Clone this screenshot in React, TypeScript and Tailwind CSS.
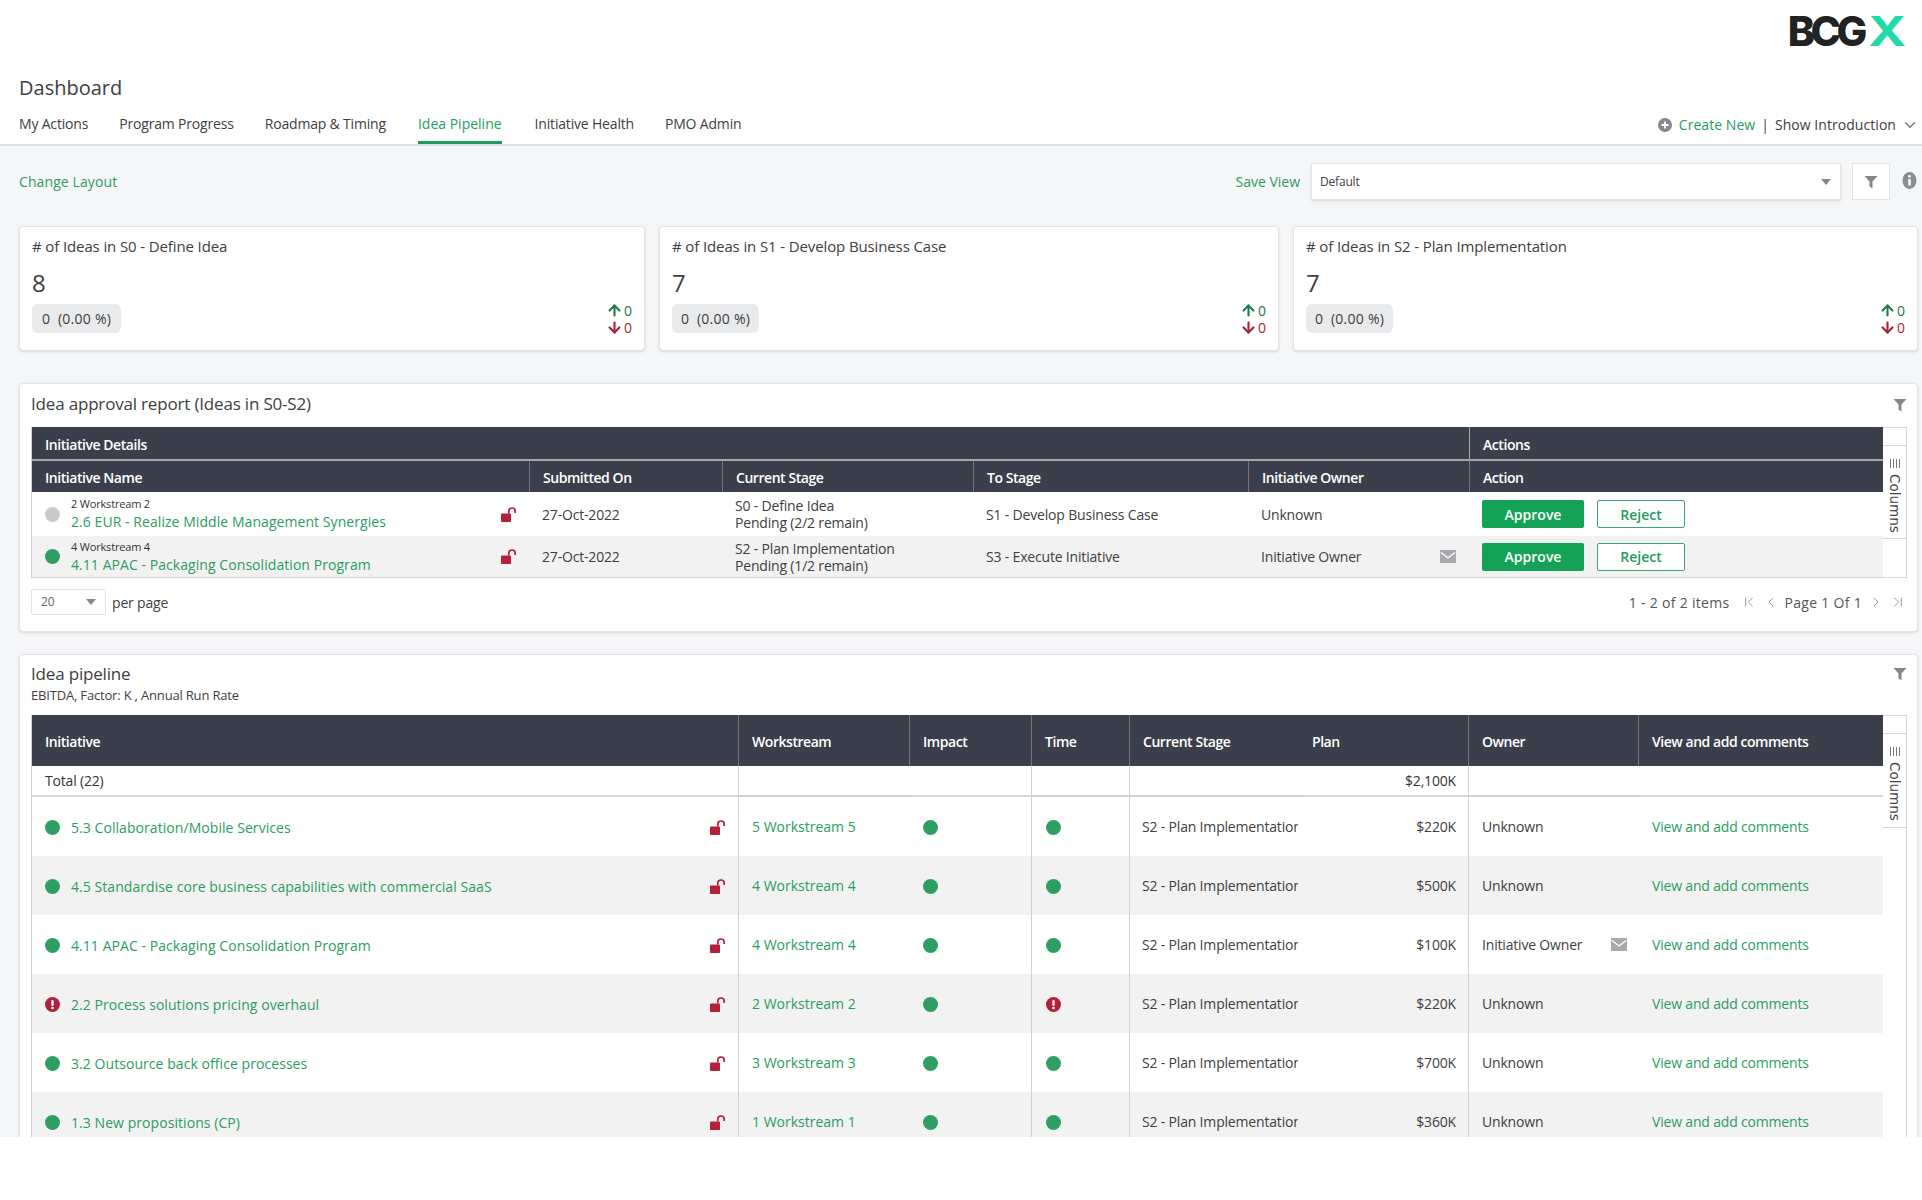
import { ArrowDown, ArrowUp, ChevronDown, ChevronFirst, ChevronLast, ChevronLeft, ChevronRight } from 'lucide-react';

// ── Data ─────────────────────────────────────────────────────────────────────

const tabs = ['My Actions', 'Program Progress', 'Roadmap & Timing', 'Idea Pipeline', 'Initiative Health', 'PMO Admin'];

const kpis = [
  { title: '# of Ideas in S0 - Define Idea', value: '8', width: 'w-[626px]', pill: 'w-[89px]' },
  { title: '# of Ideas in S1 - Develop Business Case', value: '7', width: 'w-[620px]', pill: 'w-[87px]' },
  { title: '# of Ideas in S2 - Plan Implementation', value: '7', width: 'w-[625px]', pill: 'w-[87px]' },
];

const approvals = [
  {
    status: 'grey',
    workstream: '2 Workstream 2',
    name: '2.6 EUR - Realize Middle Management Synergies',
    date: '27-Oct-2022',
    stage: ['S0 - Define Idea', 'Pending (2/2 remain)'],
    to: 'S1 - Develop Business Case',
    owner: 'Unknown',
    mail: false,
    h: 'h-[44px]',
  },
  {
    status: 'green',
    workstream: '4 Workstream 4',
    name: '4.11 APAC - Packaging Consolidation Program',
    date: '27-Oct-2022',
    stage: ['S2 - Plan Implementation', 'Pending (1/2 remain)'],
    to: 'S3 - Execute Initiative',
    owner: 'Initiative Owner',
    mail: true,
    h: 'h-[42px]',
  },
];

const pipeline = [
  { status: 'green', name: '5.3 Collaboration/Mobile Services', ws: '5 Workstream 5', time: 'green', plan: '$220K', owner: 'Unknown', mail: false },
  { status: 'green', name: '4.5 Standardise core business capabilities with commercial SaaS', ws: '4 Workstream 4', time: 'green', plan: '$500K', owner: 'Unknown', mail: false },
  { status: 'green', name: '4.11 APAC - Packaging Consolidation Program', ws: '4 Workstream 4', time: 'green', plan: '$100K', owner: 'Initiative Owner', mail: true },
  { status: 'red', name: '2.2 Process solutions pricing overhaul', ws: '2 Workstream 2', time: 'red', plan: '$220K', owner: 'Unknown', mail: false },
  { status: 'green', name: '3.2 Outsource back office processes', ws: '3 Workstream 3', time: 'green', plan: '$700K', owner: 'Unknown', mail: false },
  { status: 'green', name: '1.3 New propositions (CP)', ws: '1 Workstream 1', time: 'green', plan: '$360K', owner: 'Unknown', mail: false },
];

// ── Small drawings ───────────────────────────────────────────────────────────

function Status({ kind }: { kind: string }) {
  if (kind === 'red') {
    return (
      <svg width="15" height="15" viewBox="0 0 15 15" className="shrink-0">
        <circle cx="7.5" cy="7.5" r="7.5" fill="#b3203a" />
        <rect x="6.3" y="3" width="2.4" height="6" rx="1" fill="#fff" />
        <circle cx="7.5" cy="11" r="1.3" fill="#fff" />
      </svg>
    );
  }
  return <span className={`block w-[15px] h-[15px] rounded-full shrink-0 ${kind === 'grey' ? 'bg-[#c9cacc]' : 'bg-[#2f9e62]'}`} />;
}

function OpenLock() {
  return (
    <svg width="16" height="15" viewBox="0 0 16 15" className="shrink-0">
      <rect x="0" y="6.5" width="10" height="8.5" rx="0.8" fill="#b3203a" />
      <path d="M7.8 6.5V4.2a3.2 3.2 0 0 1 6.4 0V6" fill="none" stroke="#b3203a" strokeWidth="1.7" />
    </svg>
  );
}

function Mail() {
  return (
    <svg width="16" height="13" viewBox="0 0 16 13" className="shrink-0">
      <rect width="16" height="13" fill="#a7a9ac" />
      <path d="M1 2.5 8 8l7-5.500" fill="none" stroke="#fff" strokeWidth="1.3" />
    </svg>
  );
}

function Funnel({ size = 14 }: { size?: number }) {
  return (
    <svg width={size} height={size} viewBox="0 0 14 14">
      <path d="M0.500 1h13L8.500 6.500V13.500L5.500 11.500V6.500Z" fill="#84878c" />
    </svg>
  );
}

function ColumnsRail({ top, mid }: { top: string; mid: string }) {
  return (
    <div className="w-[24px] shrink-0 flex flex-col border border-l-0 border-[#d4d6d9]">
      <div className={`${top} border-b border-[#d4d6d9]`} />
      <div className={`${mid} flex flex-col items-center pt-[13px] border-b border-[#d4d6d9]`}>
        <div className="flex gap-[2px] h-[9px]">
          <span className="w-px bg-[#777]" />
          <span className="w-px bg-[#777]" />
          <span className="w-px bg-[#777]" />
          <span className="w-px bg-[#777]" />
        </div>
        <span className="[writing-mode:vertical-rl] text-[13.500px] leading-none tracking-normal mt-[6px] text-[#444] [font-family:'DejaVu_Sans',sans-serif]">Columns</span>
      </div>
      <div className="flex-1" />
    </div>
  );
}

const th = 'text-left font-semibold text-[14px] tracking-[-0.45px] text-white px-[13px] pt-[2px]';

// ── Page ─────────────────────────────────────────────────────────────────────

export default function App() {
  return (
    <div className="w-[1922px] h-[1200px] bg-white overflow-hidden text-[14px] tracking-[-0.18px] text-[#404040] [font-family:'Open_Sans',sans-serif]">
      {/* Header */}
      <header className="relative h-[146px] border-b-2 border-[#dfe0e2] flex flex-col px-[19px]">
        <div className="absolute right-[20px] top-[11px] flex items-center h-[40px] [font-family:Inter,sans-serif] font-extrabold text-[41px] leading-none">
          <span className="text-[#222] tracking-[-4.500px]">BCG</span>
          <span className="inline-block scale-x-125 text-[#1fdba9] ml-[9px] font-bold">X</span>
        </div>
        <h1 className="mt-[73px] text-[20px] leading-[30px] font-medium tracking-normal">Dashboard</h1>
        <nav className="flex items-start justify-between mt-[3px] flex-1">
          <ul className="flex gap-[31px]">
            {tabs.map((t) => (
              <li
                key={t}
                className={`h-[38px] pt-[8px] leading-[20px] ${t === 'Idea Pipeline' ? 'ml-[1px] mr-[2px] text-[#1f9d5c] font-medium tracking-normal border-b-[3px] border-[#1f9d5c]' : ''}`}
              >
                {t}
              </li>
            ))}
          </ul>
          <div className="flex items-center pt-[9px] mr-[-16px] tracking-[0.05px] leading-[20px]">
            <svg width="14" height="14" viewBox="0 0 14 14" className="mr-[7px]">
              <circle cx="7" cy="7" r="7" fill="#85888c" />
              <path d="M7 3.500v7M3.500 7h7" stroke="#fff" strokeWidth="1.800" />
            </svg>
            <span className="text-[#1f9d5c] font-medium">Create New</span>
            <span className="mx-[6px]">|</span>
            <span className="font-medium">Show Introduction</span>
            <ChevronDown className="w-[18px] h-[18px] ml-[5px] text-[#777]" strokeWidth={1.800} />
          </div>
        </nav>
      </header>

      <main className="h-[991px] bg-[#f5f6f8] overflow-hidden pl-[19px] pr-[4px]">
        {/* Toolbar */}
        <div className="h-[80px] flex items-start">
          <span className="mt-[26px] leading-[20px] text-[#2a9d62] font-medium tracking-[0.1px]">Change Layout</span>
          <div className="ml-auto flex items-start mt-[17px]">
            <span className="mt-[9px] leading-[20px] text-[#2a9d62] font-medium tracking-normal mr-[11px]">Save View</span>
            <div className="w-[530px] h-[37px] bg-white border border-[#e1e3e6] shadow-sm flex items-center justify-between px-[8px] text-[12px]">
              <span>Default</span>
              <span className="w-0 h-0 mr-[1px] border-x-[5px] border-x-transparent border-t-[6px] border-t-[#85888c]" />
            </div>
            <div className="ml-[11px] w-[38px] h-[37px] bg-white border border-[#e1e3e6] flex items-center justify-center">
              <Funnel size={14} />
            </div>
            <svg width="15" height="17" viewBox="0 0 15 17" className="ml-[12px] mt-[9px] mr-[1px]">
              <ellipse cx="7.500" cy="8.500" rx="7" ry="8.500" fill="#8b8e92" />
              <rect x="6.300" y="7" width="2.400" height="6.500" fill="#fff" />
              <circle cx="7.500" cy="4.300" r="1.400" fill="#fff" />
            </svg>
          </div>
        </div>

        {/* KPI cards */}
        <section className="flex gap-[14px]">
          {kpis.map((k) => (
            <div key={k.title} className={`${k.width} h-[125px] bg-white rounded-[4px] border border-[#e3e4e7] shadow-sm px-[12px] relative`}>
              <div className="mt-[9px] text-[15px] leading-[20px] tracking-[-0.12px]">{k.title}</div>
              <div className="mt-[11px] text-[24px] leading-[32px] font-medium">{k.value}</div>
              <div className={`${k.pill} mt-[5px] h-[29px] rounded-[6px] bg-[#e9eaec] flex items-center justify-center tracking-[0.25px] whitespace-pre`}>
                {'0  (0.00 %)'}
              </div>
              <div className="absolute right-[12px] top-[75px] flex flex-col leading-[17px] tracking-normal">
                <span className="flex items-center text-[#217a4c]">
                  <ArrowUp className="w-[17px] h-[17px]" strokeWidth={3} />
                  <span className="ml-[1px]">0</span>
                </span>
                <span className="flex items-center text-[#a8213a]">
                  <ArrowDown className="w-[17px] h-[17px]" strokeWidth={3} />
                  <span className="ml-[1px]">0</span>
                </span>
              </div>
            </div>
          ))}
        </section>

        {/* Idea approval report */}
        <section className="mt-[32px] h-[249px] bg-white rounded-[4px] border border-[#e3e4e7] shadow px-[11px]">
          <div className="h-[43px] pb-[4px] flex items-center justify-between">
            <h2 className="text-[17px] font-medium">Idea approval report (Ideas in S0-S2)</h2>
            <span className="mt-[3px] mr-[-1px]"><Funnel /></span>
          </div>
          <div className="flex">
            <table className="w-[1851px] table-fixed border-separate border-spacing-0 border-l border-[#cfd1d4]">
              <colgroup>
                <col className="w-[497px]" />
                <col className="w-[193px]" />
                <col className="w-[251px]" />
                <col className="w-[275px]" />
                <col className="w-[221px]" />
                <col className="w-[414px]" />
              </colgroup>
              <thead className="bg-[#3b3f4c]">
                <tr className="h-[34px]">
                  <th colSpan={5} className={`${th} border-b-2 border-[#a3a6ae]`}>Initiative Details</th>
                  <th className={`${th} border-b-2 border-l border-[#a3a6ae]`}>Actions</th>
                </tr>
                <tr className="h-[31px]">
                  {['Initiative Name', 'Submitted On', 'Current Stage', 'To Stage', 'Initiative Owner', 'Action'].map((h, i) => (
                    <th key={h} className={`${th} ${i > 0 ? 'border-l border-[#73767f]' : ''}`}>{h}</th>
                  ))}
                </tr>
              </thead>
              <tbody>
                {approvals.map((r, i) => (
                  <tr key={r.name} className={`${r.h} ${i % 2 ? 'bg-[#f2f2f2]' : 'bg-white'}`}>
                    <td className={`pl-[13px] pr-[12px] ${i === 1 ? 'border-b border-[#cfd1d4]' : ''}`}>
                      <div className="flex items-center">
                        <Status kind={r.status} />
                        <div className="ml-[11px] mt-[1px] flex-1 min-w-0">
                          <div className="text-[11px] leading-[15px] text-[#333]">{r.workstream}</div>
                          <div className="leading-[22px] text-[#2a9d62] font-medium tracking-[0.06px]">{r.name}</div>
                        </div>
                        <OpenLock />
                      </div>
                    </td>
                    <td className={`px-[13px] ${i === 1 ? 'border-b border-[#cfd1d4]' : ''}`}>{r.date}</td>
                    <td className={`px-[13px] leading-[17px] ${i === 1 ? 'border-b border-[#cfd1d4]' : ''}`}>
                      <div>{r.stage[0]}</div>
                      <div>{r.stage[1]}</div>
                    </td>
                    <td className={`px-[13px] ${i === 1 ? 'border-b border-[#cfd1d4]' : ''}`}>{r.to}</td>
                    <td className={`px-[13px] ${i === 1 ? 'border-b border-[#cfd1d4]' : ''}`}>
                      <div className="flex items-center justify-between">
                        <span>{r.owner}</span>
                        {r.mail && <Mail />}
                      </div>
                    </td>
                    <td className={`px-[13px] ${i === 1 ? 'border-b border-[#cfd1d4]' : ''}`}>
                      <div className="flex gap-[13px] tracking-normal">
                        <button className="w-[102px] h-[28px] rounded-[2px] bg-[#14a356] text-white font-semibold">Approve</button>
                        <button className="w-[88px] h-[28px] rounded-[2px] bg-white border border-[#3aa670] text-[#1f9d5c] font-semibold">Reject</button>
                      </div>
                    </td>
                  </tr>
                ))}
              </tbody>
            </table>
            <ColumnsRail top="h-[18px]" mid="h-[93px]" />
          </div>
          <div className="flex items-center justify-between mt-[11px]">
            <div className="flex items-center">
              <div className="w-[75px] h-[26px] bg-white border border-[#e1e3e6] rounded-[2px] flex items-center justify-between px-[9px] text-[12px] text-[#666]">
                <span>20</span>
                <span className="w-0 h-0 border-x-[5px] border-x-transparent border-t-[6px] border-t-[#85888c]" />
              </div>
              <span className="ml-[6px]">per page</span>
            </div>
            <div className="flex items-center text-[#555] tracking-[0.3px]">
              <span className="mr-[11px]">1 - 2 of 2 items</span>
              <ChevronFirst className="w-[16px] h-[16px] text-[#999] mr-[6px]" strokeWidth={1.500} />
              <ChevronLeft className="w-[16px] h-[16px] text-[#999] mr-[6px]" strokeWidth={1.500} />
              <span className="mr-[6px]">Page 1 Of 1</span>
              <ChevronRight className="w-[16px] h-[16px] text-[#999] mr-[6px]" strokeWidth={1.500} />
              <ChevronLast className="w-[16px] h-[16px] text-[#999]" strokeWidth={1.500} />
            </div>
          </div>
        </section>

        {/* Idea pipeline */}
        <section className="mt-[22px] h-[600px] bg-white rounded-[4px] border border-[#e3e4e7] shadow px-[11px]">
          <div className="h-[60px] pt-[8px] flex justify-between">
            <div>
              <h2 className="text-[17px] leading-[22px] font-medium">Idea pipeline</h2>
              <div className="text-[13px] leading-[18px] mt-[1px]">EBITDA, Factor: K , Annual Run Rate</div>
            </div>
            <span className="mt-[4px] mr-[-1px]"><Funnel /></span>
          </div>
          <div className="flex">
            <table className="w-[1851px] table-fixed border-separate border-spacing-0 border-l border-[#cfd1d4]">
              <colgroup>
                <col className="w-[706px]" />
                <col className="w-[171px]" />
                <col className="w-[122px]" />
                <col className="w-[98px]" />
                <col className="w-[170px]" />
                <col className="w-[169px]" />
                <col className="w-[170px]" />
                <col className="w-[245px]" />
              </colgroup>
              <thead className="bg-[#3b3f4c]">
                <tr className="h-[51px]">
                  <th className={th}>Initiative</th>
                  <th className={`${th} border-l border-[#73767f]`}>Workstream</th>
                  <th className={`${th} border-l border-[#73767f]`}>Impact</th>
                  <th className={`${th} border-l border-[#73767f]`}>Time</th>
                  <th className={`${th} border-l border-[#73767f]`}>Current Stage</th>
                  <th className={th}>Plan</th>
                  <th className={`${th} border-l border-[#73767f]`}>Owner</th>
                  <th className={`${th} border-l border-[#73767f]`}>View and add comments</th>
                </tr>
              </thead>
              <tbody>
                <tr className="h-[31px] text-[#333]">
                  <td className="px-[13px] border-b-2 border-[#d5d6d9]">Total (22)</td>
                  <td className="border-b-2 border-l border-[#d0d1d4]" />
                  <td className="border-b-2 border-[#d5d6d9]" />
                  <td className="border-b-2 border-l border-[#d0d1d4]" />
                  <td className="border-b-2 border-l border-[#d0d1d4]" />
                  <td className="pr-[12px] text-right border-b-2 border-[#d5d6d9]">$2,100K</td>
                  <td className="border-b-2 border-l border-[#d0d1d4]" />
                  <td className="border-b-2 border-[#d5d6d9]" />
                </tr>
                {pipeline.map((r, i) => (
                  <tr key={r.name} className={`h-[59px] ${i % 2 ? 'bg-[#f2f2f2]' : 'bg-white'}`}>
                    <td className="pl-[13px] pr-[12px]">
                      <div className="flex items-center mt-[2px]">
                        <Status kind={r.status} />
                        <span className="ml-[11px] flex-1 text-[#2a9d62] font-medium tracking-[0.06px]">{r.name}</span>
                        <OpenLock />
                      </div>
                    </td>
                    <td className="px-[13px] text-[#2a9d62] font-medium tracking-normal border-l border-[#cfd1d4]">{r.ws}</td>
                    <td className="px-[13px] border-l border-transparent"><div className="mt-[2px]"><Status kind="green" /></div></td>
                    <td className="px-[14px] border-l border-[#cfd1d4]"><div className="mt-[2px]"><Status kind={r.time} /></div></td>
                    <td className="pl-[12px] border-l border-[#cfd1d4]">
                      <div className="overflow-hidden whitespace-nowrap mr-[1px]">S2 - Plan Implementation</div>
                    </td>
                    <td className="pr-[12px] text-right">{r.plan}</td>
                    <td className="pl-[13px] pr-[11px] border-l border-[#cfd1d4]">
                      <div className="flex items-center justify-between">
                        <span>{r.owner}</span>
                        {r.mail && <Mail />}
                      </div>
                    </td>
                    <td className="pl-[14px] pr-[12px] text-[#2a9d62]">View and add comments</td>
                  </tr>
                ))}
              </tbody>
            </table>
            <ColumnsRail top="h-[18px]" mid="h-[94px]" />
          </div>
        </section>
      </main>
    </div>
  );
}
